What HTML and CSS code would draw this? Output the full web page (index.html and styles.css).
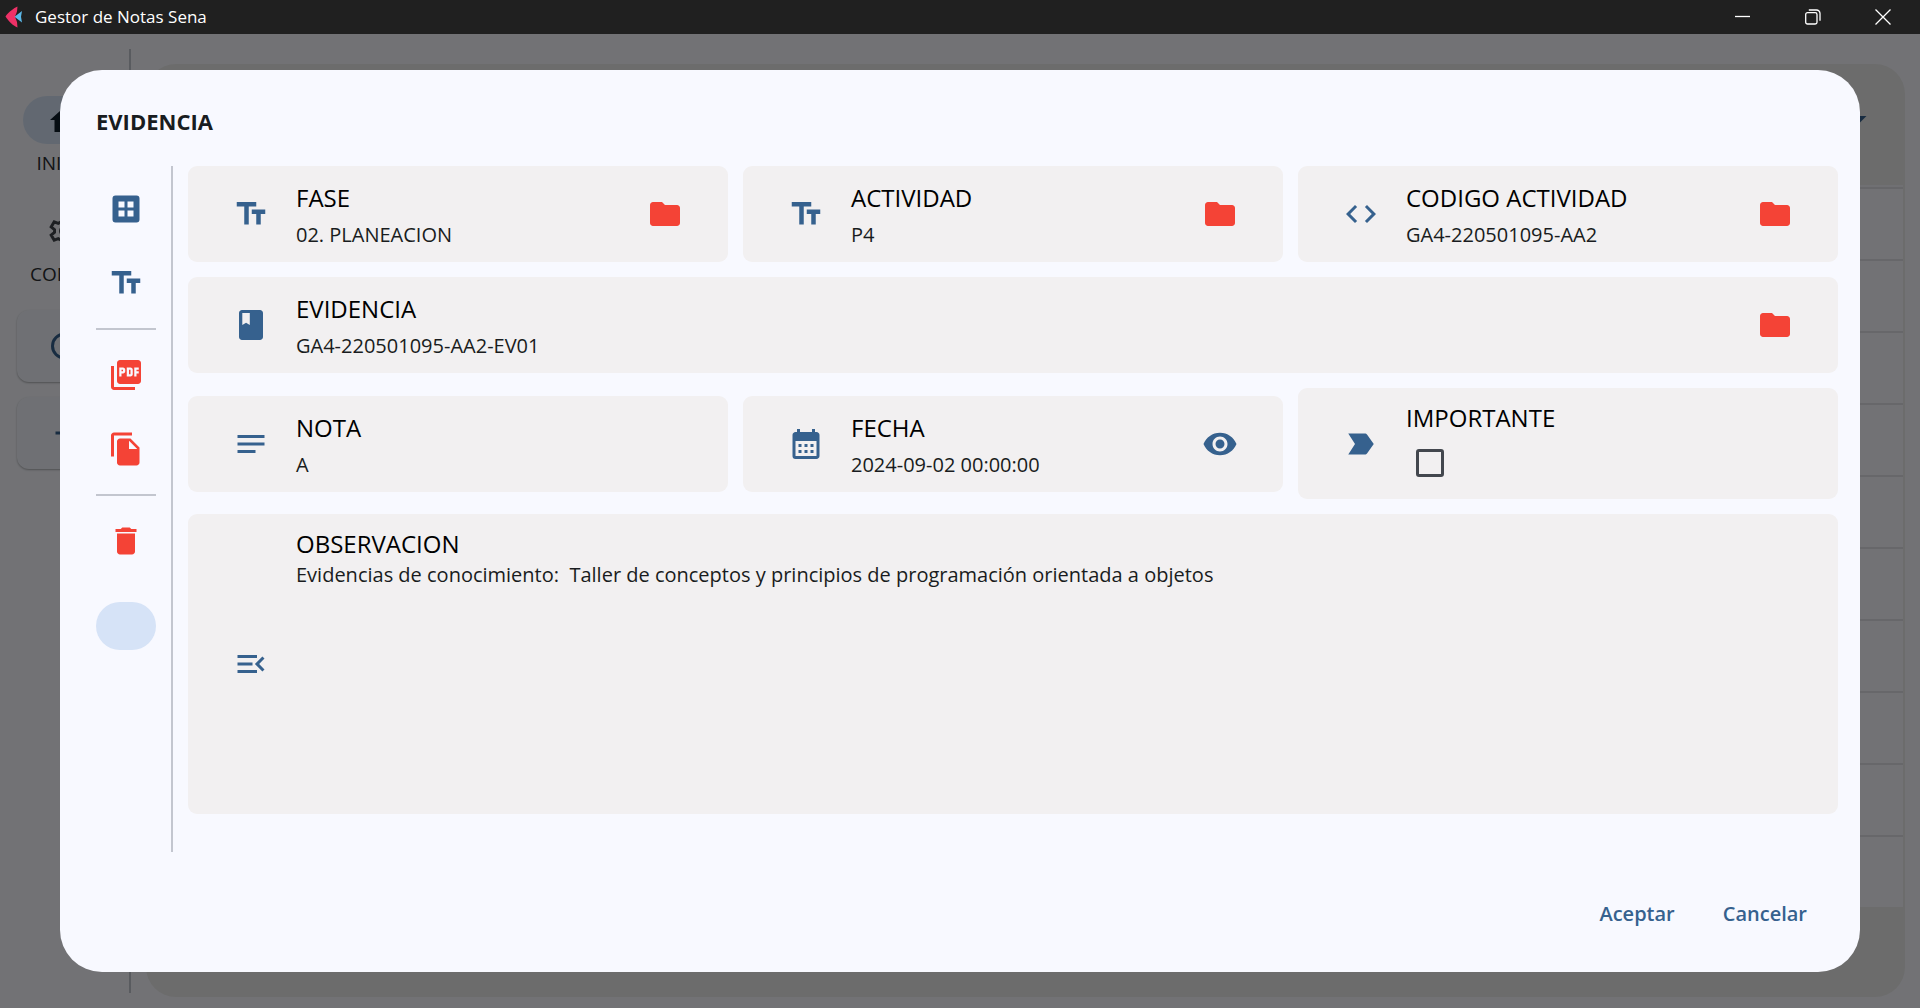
FILE: index.html
```html
<!DOCTYPE html>
<html lang="es">
<head>
<meta charset="utf-8">
<meta name="viewport" content="width=device-width, initial-scale=1">
<title>Gestor de Notas Sena</title>
<link rel="stylesheet" href="styles.css">
</head>
<body>
<svg class="sprite" aria-hidden="true">
  <symbol id="i-text" viewBox="0 0 24 24"><path d="M2.5 4v3h5v12h3V7h5V4h-13zm19 5h-9v3h3v7h3v-7h3V9z"/></symbol>
  <symbol id="i-folder" viewBox="0 0 24 24"><path d="M10 4H4c-1.100 0-1.990.9-1.990 2L2 18c0 1.100.9 2 2 2h16c1.100 0 2-.9 2-2V8c0-1.100-.9-2-2-2h-8l-2-2z"/></symbol>
</svg>

<header class="titlebar">
  <svg class="logo" viewBox="0 0 18 22" aria-hidden="true"><path d="M12.500.5C9 2 3.500 6 .5 10.500 3.500 15.500 8.500 20 12.500 21.500L12 16 10 10.700 12 5.500z" fill="#ee3167"/><path d="M17 5 9.500 10.700 17 16.500 16 10.700z" fill="#5bb8e8"/></svg>
  <span class="app-name">Gestor de Notas Sena</span>
  <div class="win-controls">
    <button aria-label="Minimizar"><svg viewBox="0 0 16 16"><path d="M0 7.500h15"/></svg></button>
    <button aria-label="Restaurar"><svg viewBox="0 0 16 16"><rect x=".7" y="3.700" width="11.300" height="11.300" rx="1.800"/><path d="M3.800 1h7.700a3.500 3.500 0 0 1 3.500 3.500v7.200"/></svg></button>
    <button aria-label="Cerrar"><svg viewBox="0 0 16 16"><path d="M.5.500l15 15M15.500.500l-15 15"/></svg></button>
  </div>
</header>

<div class="workspace">
  <div class="app" inert>
    <nav class="nav">
      <a class="nav-item" href="#inicio"><span class="nav-pill active"><svg class="icon" viewBox="0 0 24 24"><path d="M10 20v-6h4v6h5v-8h3L12 3 2 12h3v8z"/></svg></span>INICIO</a>
      <a class="nav-item" href="#config"><span class="nav-pill"><svg class="icon gear" viewBox="0 0 24 24"><path d="M10 3h4l.5 2.800 2 1.100 2.700-1 2 3.400-2.200 1.800v1.800l2.200 1.800-2 3.400-2.700-1-2 1.100L14 21h-4l-.5-2.800-2-1.100-2.700 1-2-3.400L5 12.900v-1.800L2.800 9.300l2-3.400 2.700 1 2-1.100z"/><circle cx="12" cy="12" r="3"/></svg></span>CONFIG</a>
      <div class="nav-actions">
        <button class="fab" aria-label="Buscar"><svg class="icon gear" viewBox="0 0 24 24"><circle cx="11" cy="12" r="8"/></svg></button>
        <button class="fab" aria-label="Agregar"><svg class="icon" viewBox="0 0 24 24"><path d="M19 13h-6v6h-2v-6H5v-2h6V5h2v6h6z"/></svg></button>
      </div>
    </nav>
    <main class="panel">
      <div class="panel-head"><svg class="icon" viewBox="0 0 24 24"><path d="M7 10l5 5 5-5z"/></svg></div>
      <div class="list"><div></div><div></div><div></div><div></div><div></div><div></div><div></div><div></div><div></div><div></div></div>
    </main>
  </div>

  <div class="scrim">
    <section class="dialog" role="dialog" aria-modal="true" aria-labelledby="dlg-title">
      <h1 class="dialog-title" id="dlg-title">EVIDENCIA</h1>
      <div class="dialog-body">
        <div class="rail">
          <button class="rail-btn" aria-label="Tabla"><svg class="icon" viewBox="0 0 24 24"><path fill-rule="evenodd" d="M5 3h14a2 2 0 0 1 2 2v14a2 2 0 0 1-2 2H5a2 2 0 0 1-2-2V5a2 2 0 0 1 2-2zM7 7v4h4V7zM13 7v4h4V7zM7 13v4h4v-4zM13 13v4h4v-4z"/></svg></button>
          <button class="rail-btn" aria-label="Texto"><svg class="icon"><use href="#i-text"/></svg></button>
          <hr>
          <button class="rail-btn red" aria-label="PDF"><svg class="icon" viewBox="0 0 24 24"><path d="M20 2H8c-1.100 0-2 .9-2 2v12c0 1.100.9 2 2 2h12c1.100 0 2-.9 2-2V4c0-1.100-.9-2-2-2zm-8.500 7.500c0 .83-.67 1.500-1.500 1.500H9v2H7.500V7H10c.83 0 1.500.67 1.500 1.500v1zm5 2c0 .83-.67 1.500-1.500 1.500h-2.500V7H15c.83 0 1.500.67 1.500 1.500v3zm4-3H19v1h1.500V11H19v2h-1.500V7h3v1.500zM9 9.500h1v-1H9v1zM4 6H2v14c0 1.100.9 2 2 2h14v-2H4V6zm10 5.500h1v-3h-1v3z"/></svg></button>
          <button class="rail-btn red" aria-label="Copiar"><svg class="icon" viewBox="0 0 24 24"><path d="M16 1H4c-1.100 0-2 .9-2 2v14h2V3h12V1zm-1 4l6 6v10c0 1.100-.9 2-2 2H7.990C6.890 23 6 22.100 6 21l.01-14c0-1.100.89-2 1.990-2h7zm-1 7h5.500L14 6.500V12z"/></svg></button>
          <hr>
          <button class="rail-btn red" aria-label="Eliminar"><svg class="icon" viewBox="0 0 24 24"><path d="M6 19c0 1.100.9 2 2 2h8c1.100 0 2-.9 2-2V7H6v12zM19 4h-3.500l-1-1h-5l-1 1H5v2h14V4z"/></svg></button>
          <span class="rail-pill"></span>
        </div>
        <div class="cards">
          <article class="card">
            <svg class="icon"><use href="#i-text"/></svg>
            <div class="text"><h2>FASE</h2><p>02. PLANEACION</p></div>
            <button class="red" aria-label="Abrir carpeta de fase"><svg class="icon"><use href="#i-folder"/></svg></button>
          </article>
          <article class="card">
            <svg class="icon"><use href="#i-text"/></svg>
            <div class="text"><h2>ACTIVIDAD</h2><p>P4</p></div>
            <button class="red" aria-label="Abrir carpeta de actividad"><svg class="icon"><use href="#i-folder"/></svg></button>
          </article>
          <article class="card">
            <svg class="icon" viewBox="0 0 24 24"><path d="M9.400 16.600L4.800 12l4.600-4.600L8 6l-6 6 6 6 1.400-1.400zm5.200 0l4.600-4.600-4.600-4.600L16 6l6 6-6 6-1.400-1.400z"/></svg>
            <div class="text"><h2>CODIGO ACTIVIDAD</h2><p>GA4-220501095-AA2</p></div>
            <button class="red" aria-label="Abrir carpeta del código"><svg class="icon"><use href="#i-folder"/></svg></button>
          </article>
          <article class="card wide">
            <svg class="icon" viewBox="0 0 24 24"><path fill-rule="evenodd" d="M18 2H6c-1.100 0-2 .9-2 2v16c0 1.100.9 2 2 2h12c1.100 0 2-.9 2-2V4c0-1.100-.9-2-2-2zM6.200 4h5v8l-2.500-1.500L6.200 12V4z"/></svg>
            <div class="text"><h2>EVIDENCIA</h2><p>GA4-220501095-AA2-EV01</p></div>
            <button class="red" aria-label="Abrir carpeta de evidencia"><svg class="icon"><use href="#i-folder"/></svg></button>
          </article>
          <article class="card">
            <svg class="icon" viewBox="0 0 24 24"><path d="M3 18h12v-2H3v2zM3 6v2h18V6H3zm0 7h18v-2H3v2z"/></svg>
            <div class="text"><h2>NOTA</h2><p>A</p></div>
          </article>
          <article class="card">
            <svg class="icon" viewBox="0 0 24 24"><path d="M19 4h-1V2h-2v2H8V2H6v2H5c-1.110 0-1.990.9-1.990 2L3 20a2 2 0 0 0 2 2h14c1.100 0 2-.9 2-2V6c0-1.100-.9-2-2-2zm0 16H5V10h14v10zM9 14H7v-2h2v2zm4 0h-2v-2h2v2zm4 0h-2v-2h2v2zm-8 4H7v-2h2v2zm4 0h-2v-2h2v2zm4 0h-2v-2h2v2z"/></svg>
            <div class="text"><h2>FECHA</h2><p>2024-09-02 00:00:00</p></div>
            <button aria-label="Ver fecha"><svg class="icon" viewBox="0 0 24 24"><path d="M12 4.500C7 4.500 2.730 7.610 1 12c1.730 4.390 6 7.500 11 7.500s9.270-3.110 11-7.500c-1.730-4.390-6-7.500-11-7.500zM12 17c-2.760 0-5-2.240-5-5s2.240-5 5-5 5 2.240 5 5-2.240 5-5 5zm0-8c-1.660 0-3 1.340-3 3s1.340 3 3 3 3-1.340 3-3-1.340-3-3-3z"/></svg></button>
          </article>
          <article class="card">
            <svg class="icon" viewBox="0 0 24 24"><path d="M3.500 19h11c.67 0 1.270-.33 1.630-.84L20.500 12l-4.370-6.160C15.770 5.330 15.170 5 14.500 5h-11L8 12z"/></svg>
            <div class="text"><h2><label for="importante">IMPORTANTE</label></h2><input class="check" type="checkbox" id="importante"></div>
          </article>
          <article class="card wide tall">
            <svg class="icon" viewBox="0 0 24 24"><path d="M3 18h13v-2H3v2zm0-5h10v-2H3v2zm0-7v2h13V6H3zm18 9.590L17.420 12 21 8.410 19.590 7l-5 5 5 5L21 15.590z"/></svg>
            <div class="text"><h2>OBSERVACION</h2><p>Evidencias de conocimiento:&nbsp; Taller de conceptos y principios de programación orientada a objetos</p></div>
          </article>
        </div>
      </div>
      <footer class="dialog-actions">
        <button>Aceptar</button>
        <button>Cancelar</button>
      </footer>
    </section>
  </div>
</div>
</body>
</html>
```
FILE: styles.css
```css
* { box-sizing: border-box; }

html, body { height: 100%; }

body {
  margin: 0;
  display: flex;
  flex-direction: column;
  background: #f8f9ff;
  color: #191c20;
  font-family: "Open Sans", "Segoe UI", sans-serif;
}

button {
  display: flex;
  align-items: center;
  justify-content: center;
  padding: 0;
  border: 0;
  background: none;
  color: inherit;
  font: inherit;
  cursor: pointer;
}

h1, h2, p { margin: 0; }

.sprite { display: none; }

.icon {
  display: block;
  flex: none;
  width: 36px;
  height: 36px;
  fill: currentColor;
}

.icon.gear {
  fill: none;
  stroke: currentColor;
  stroke-width: 2;
}

.red { color: #f44336; }

/* Window title bar */
.titlebar {
  display: flex;
  flex: none;
  align-items: center;
  height: 34px;
  padding: 0 2px 0 5px;
  background: #202020;
  color: #fff;
}

.logo { width: 18px; height: 22px; }

.app-name {
  margin-left: 12px;
  font-size: 17px;
  line-height: 24px;
}

.win-controls {
  display: flex;
  align-self: stretch;
  margin-left: auto;
}

.win-controls button { width: 70px; }

.win-controls svg {
  width: 16px;
  height: 16px;
  fill: none;
  stroke: #fff;
  stroke-width: 1.3;
}

/* Application behind the dialog */
.workspace {
  position: relative;
  flex: 1;
  min-height: 0;
}

.app {
  display: flex;
  height: 100%;
  padding: 15px;
  gap: 15px;
}

.nav {
  display: flex;
  flex-direction: column;
  width: 116px;
  padding: 47px 14px 0 0;
  border-right: 2px solid #c3c6cf;
}

.nav-item {
  display: flex;
  flex-direction: column;
  align-items: center;
  height: 111px;
  gap: 6px;
  color: #2a2d32;
  font-size: 19px;
  line-height: 26px;
  text-decoration: none;
}

.nav-pill {
  display: flex;
  align-items: center;
  justify-content: center;
  width: 84px;
  height: 48px;
  border-radius: 24px;
  color: #43474e;
}

.nav-pill.active { background: #d6e3f7; color: #0e1d2a; }

.nav-actions {
  display: grid;
  gap: 15px;
  margin-top: -8px;
  padding-left: 2px;
}

.fab {
  height: 72px;
  border-radius: 12px;
  background: #f2f5fc;
  box-shadow: 0 1px 2px rgba(0, 0, 0, .3);
  color: #36618e;
}

.panel {
  flex: 1;
  margin: 15px 0 -4px;
  padding: 0 2px;
  border-radius: 30px;
  background: #ebebeb;
}

.panel-head {
  display: flex;
  justify-content: flex-end;
  height: 123px;
  padding: 37px 26px 0;
  border-bottom: 2px solid #f4f5fa;
  color: #36618e;
}

.list div {
  height: 72px;
  border-top: 2px solid #e0e1e6;
  background: #f8f9ff;
}

/* Dialog */
.scrim {
  position: absolute;
  inset: 0;
  display: flex;
  padding: 36px 60px;
  background: rgba(0, 0, 0, .54);
}

.dialog {
  display: flex;
  flex: 1;
  flex-direction: column;
  border-radius: 42px;
  background: #f8f9ff;
}

.dialog-title {
  padding: 35px 36px 29px;
  font-size: 22px;
  font-weight: 700;
  line-height: 32px;
}

.dialog-body {
  display: flex;
  flex: 1;
  padding: 0 22px 0 36px;
}

.rail {
  flex: none;
  width: 77px;
  padding: 6px 15px 0 0;
  border-right: 2px solid #c3c6cf;
  color: #36618e;
}

.rail .red { color: #f44336; }

.rail-btn { width: 60px; height: 74px; }

.rail hr {
  height: 2px;
  margin: 8px 0;
  border: 0;
  background: #c3c6cf;
}

.rail-pill {
  display: block;
  height: 48px;
  margin-top: 24px;
  border-radius: 24px;
  background: #d6e3f7;
}

.cards {
  display: grid;
  flex: 1;
  grid-template-columns: repeat(3, 1fr);
  gap: 15px;
  align-content: start;
  align-items: center;
  padding-left: 15px;
}

.card {
  display: flex;
  align-items: center;
  gap: 27px;
  min-height: 96px;
  padding: 12px 45px;
  border-radius: 9px;
  background: #f2f0f1;
  color: #36618e;
}

.card.wide { grid-column: 1 / -1; }

.card.tall { min-height: 300px; }

.text {
  display: grid;
  flex: 1;
  gap: 6px;
  color: #000;
}

.tall .text { align-self: flex-start; gap: 0; }

.text h2 {
  font-size: 24px;
  font-weight: 400;
  line-height: 36px;
}

.text p {
  color: #191c20;
  font-size: 20px;
  line-height: 26px;
}

.card .red { color: #f44336; }

.check {
  appearance: none;
  width: 28px;
  height: 28px;
  margin: 7px 10px 10px;
  border: 3px solid #43474e;
  border-radius: 3px;
}

.dialog-actions {
  display: flex;
  justify-content: flex-end;
  gap: 12px;
  padding: 31px 35px 29px;
}

.dialog-actions button {
  height: 60px;
  padding: 0 18px;
  color: #36618e;
  font-size: 20px;
  font-weight: 600;
}
```
